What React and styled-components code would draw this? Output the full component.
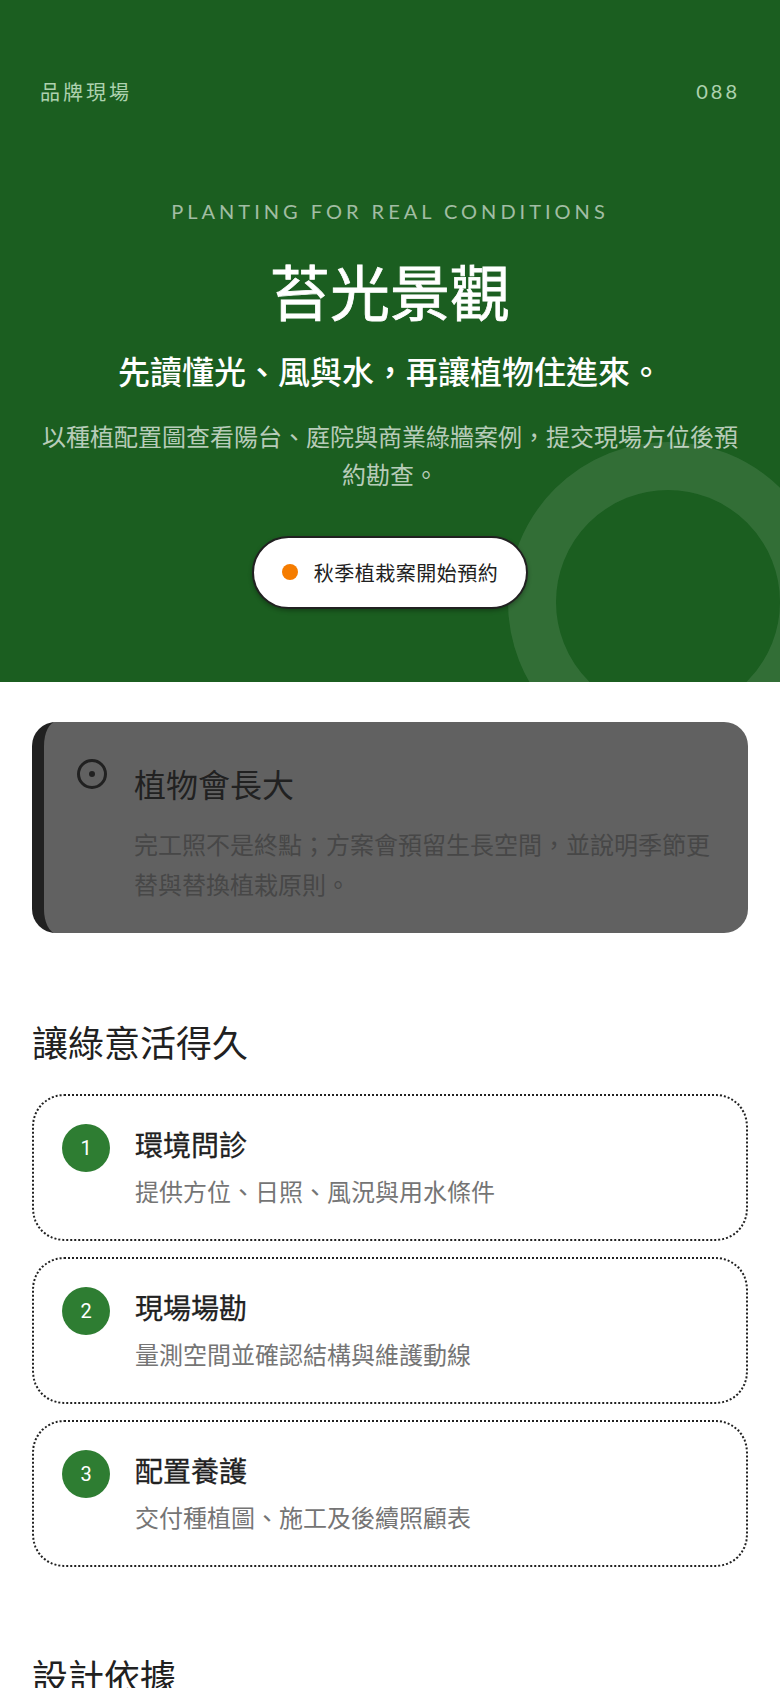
import React from 'react';
import styled, { createGlobalStyle } from 'styled-components';

const GlobalStyle = createGlobalStyle`
  html, body {
    margin: 0;
    padding: 0;
    background: #ffffff;
    font-family: Lato, "Noto Sans CJK TC", sans-serif;
    color: #212121;
  }
  * { box-sizing: border-box; }
`;

const Page = styled.div`
  height: 100vh;
  overflow: hidden;
`;

const Hero = styled.header`
  position: relative;
  overflow: hidden;
  height: 682px;
  padding: 78px 40px 0;
  background: #1b5e20;
  text-align: center;
`;

const Ring = styled.div`
  position: absolute;
  right: -48px;
  bottom: -80px;
  width: 320px;
  height: 320px;
  border: 48px solid rgba(255, 255, 255, 0.1);
  border-radius: 50%;
`;

const HeroContent = styled.div`
  position: relative;
  display: flex;
  flex-direction: column;
  align-items: center;
`;

const TopRow = styled.div`
  display: flex;
  justify-content: space-between;
  align-items: center;
  align-self: stretch;
  height: 26px;
  font-size: 20px;
  letter-spacing: 3px;
  color: #c8e6c9;
  opacity: 0.85;
`;

const Eyebrow = styled.div`
  margin-top: 93px;
  font-size: 20px;
  line-height: 28px;
  letter-spacing: 4px;
  color: rgba(255, 255, 255, 0.6);
`;

const Title = styled.h1`
  margin: 26px 0 0;
  font-size: 60px;
  line-height: 84px;
  font-weight: 400;
  -webkit-text-stroke: 0.8px #ffffff;
  color: #ffffff;
`;

const Subtitle = styled.p`
  margin: 15px 0 0;
  font-size: 32px;
  line-height: 44px;
  font-weight: 500;
  color: #ffffff;
`;

const Lead = styled.p`
  margin: 24px 0 0;
  font-size: 24px;
  line-height: 38.4px;
  color: rgba(255, 255, 255, 0.7);
`;

const Pill = styled.div`
  display: flex;
  align-items: center;
  gap: 16px;
  height: 73px;
  margin-top: 41px;
  padding: 0 28px;
  border: 2px solid #212121;
  border-radius: 37px;
  background: #ffffff;
  box-shadow: 0 2px 4px rgba(0, 0, 0, 0.3);
  font-size: 20px;
  letter-spacing: 0.5px;
  color: #212121;
`;

const Dot = styled.span`
  width: 16px;
  height: 16px;
  border-radius: 50%;
  background: #f57c00;
`;

const Main = styled.main`
  padding: 40px 32px 0;
`;

const Notice = styled.section`
  display: flex;
  gap: 24px;
  height: 211px;
  padding: 34px 30px 0;
  border-left: 12px solid #212121;
  border-radius: 24px;
  background: #616161;
`;

const NoticeIcon = styled.svg`
  flex: none;
  width: 36px;
  height: 36px;
  color: #212121;
`;

const NoticeBody = styled.div`
  padding-top: 7px;
`;

const NoticeTitle = styled.h2`
  margin: 0;
  font-size: 32px;
  line-height: 44px;
  font-weight: 400;
  color: #212121;
`;

const NoticeText = styled.p`
  margin: 18px 0 0;
  font-size: 24px;
  line-height: 39.6px;
  color: #474747;
`;

const SectionTitle = styled.h2`
  margin: 85px 0 0;
  font-size: 36px;
  line-height: 50px;
  font-weight: 400;
  color: #212121;
`;

const Steps = styled.div`
  display: flex;
  flex-direction: column;
  gap: 16px;
  margin-top: 26px;
`;

const Step = styled.article`
  display: flex;
  gap: 25px;
  height: 147px;
  padding: 28px;
  border: 2px dotted #212121;
  border-radius: 32px;
`;

const StepNumber = styled.span`
  display: flex;
  flex: none;
  align-items: center;
  justify-content: center;
  width: 48px;
  height: 48px;
  border-radius: 50%;
  background: #2e7d32;
  font-family: Roboto, sans-serif;
  font-size: 20px;
  color: #ffffff;
`;

const StepTitle = styled.h3`
  margin: 2px 0 0;
  font-size: 28px;
  line-height: 39px;
  font-weight: 400;
  -webkit-text-stroke: 0.3px #212121;
  color: #212121;
`;

const StepText = styled.p`
  margin: 10px 0 0;
  font-size: 24px;
  line-height: 34px;
  color: #757575;
`;

const steps = [
  { id: 1, title: '環境問診', text: '提供方位、日照、風況與用水條件' },
  { id: 2, title: '現場場勘', text: '量測空間並確認結構與維護動線' },
  { id: 3, title: '配置養護', text: '交付種植圖、施工及後續照顧表' },
];

export default function App() {
  return (
    <Page>
      <GlobalStyle />
      <Hero>
        <Ring />
        <HeroContent>
          <TopRow>
            <span>品牌現場</span>
            <span>088</span>
          </TopRow>
          <Eyebrow>PLANTING FOR REAL CONDITIONS</Eyebrow>
          <Title>苔光景觀</Title>
          <Subtitle>先讀懂光、風與水，再讓植物住進來。</Subtitle>
          <Lead>以種植配置圖查看陽台、庭院與商業綠牆案例，提交現場方位後預約勘查。</Lead>
          <Pill>
            <Dot />
            秋季植栽案開始預約
          </Pill>
        </HeroContent>
      </Hero>
      <Main>
        <Notice>
          <NoticeIcon viewBox="0 0 36 36" fill="none">
            <circle cx="18" cy="18" r="13.5" stroke="currentColor" strokeWidth="3" />
            <circle cx="18" cy="18" r="3" fill="currentColor" />
          </NoticeIcon>
          <NoticeBody>
            <NoticeTitle>植物會長大</NoticeTitle>
            <NoticeText>完工照不是終點；方案會預留生長空間，並說明季節更替與替換植栽原則。</NoticeText>
          </NoticeBody>
        </Notice>
        <SectionTitle>讓綠意活得久</SectionTitle>
        <Steps>
          {steps.map((step) => (
            <Step key={step.id}>
              <StepNumber>{step.id}</StepNumber>
              <div>
                <StepTitle>{step.title}</StepTitle>
                <StepText>{step.text}</StepText>
              </div>
            </Step>
          ))}
        </Steps>
        <SectionTitle>設計依據</SectionTitle>
      </Main>
    </Page>
  );
}
